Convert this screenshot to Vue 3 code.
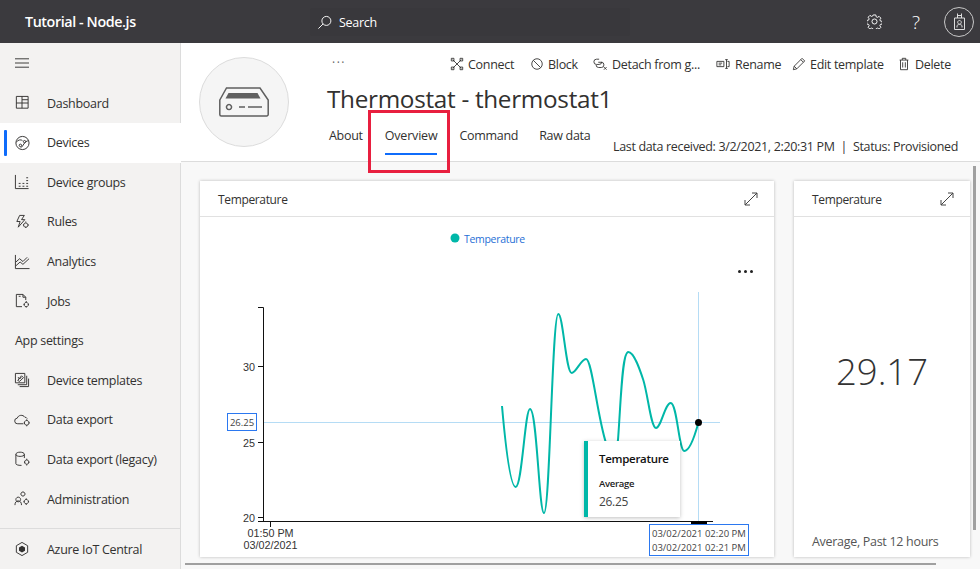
<script setup>
const groupA = [
  { label: 'Dashboard', icon: 'dash' },
  { label: 'Devices', icon: 'dev', active: true },
  { label: 'Device groups', icon: 'groups' },
  { label: 'Rules', icon: 'rules' },
  { label: 'Analytics', icon: 'analytics' },
  { label: 'Jobs', icon: 'jobs' },
]
const groupB = [
  { label: 'Device templates', icon: 'templates' },
  { label: 'Data export', icon: 'cloud' },
  { label: 'Data export (legacy)', icon: 'db' },
  { label: 'Administration', icon: 'admin' },
]
const paths = {
  dash: 'M2.500 1.500h12.500v12.500H2.500zM2.500 8.500h12.500M8.500 8.500v5.500M8.500 8.500V1.500M8.500 5h6.500',
  dev: 'M9 1.500a7 7 0 1 0 0 14a7 7 0 0 0 0-14zM2.500 7.500c2-2.500 5-3 6.500-1.500M15.500 6c-2 0-4 2-5 3.500s-2 3.500-3.500 4M5.500 11a1.300 1.300 0 1 0 2.600 0a1.300 1.300 0 1 0-2.600 0M10 7a1.200 1.200 0 1 0 2.400 0a1.200 1.200 0 1 0-2.400 0',
  groups: 'M1.500 1v14.500h14M5 13h2M9 13h2M13 13h2M9 10h2M13 10h2M13 7h2M13 4h2M5 10h2',
  rules: 'M6 1.500h5l-3 4.500h3.500l-7 8 2-6H3zM12.500 9.500a2.300 2.300 0 1 0 .01 0M12.500 8v1M12.500 13.500v1.200M9.500 11.700h1M14.800 11.700h1',
  analytics: 'M1.500 1v14.500h15M2 12.500l4.500-4 3 2.500 6.500-6M2 8.500l4-3.500 3.500 3L14 3.500',
  jobs: 'M2.500 1.500h7l3 3v3M2.500 1.500v13h6M5 3.500h2M9.500 1.500v3h3M13 10a2.300 2.300 0 1 0 .01 0M13 8.500v1.200M13 14.200v1.200M10.300 12.200h1.200M14.600 12.200h1.200',
  templates: 'M1.500 1.500h10v10h-10zM13.500 4v9.500H4M15.500 7v8.500H6M4 9l4-5 2 2-4 4zM4.500 5.500a1.500 1.500 0 1 0 3 0',
  cloud: 'M10 12.500H4a3 3 0 0 1 -.5-6c1-3.500 6-4 8-1 1 0 2 .5 2.500 1.500M13.500 9a2.500 2.500 0 1 0 .01 0M13.500 7.800v1.200M13.500 14v1.200M10.500 11.500h1.200M15.300 11.500h1.200',
  db: 'M2 3.500c0-3 9-3 9 0s-9 3-9 0zM2 3.500v10c0 1 2 1.800 6 1.800M11 3.500v4M13.500 9.500a2.300 2.300 0 1 0 .01 0M13.500 8.200v1.200M13.500 14.200v1.200M10.800 12h1.200M15.100 12h1.200',
  admin: 'M9.500 1a2.200 2.200 0 1 0 .01 0M4.500 6.500a2.500 2.500 0 1 0 .01 0M1 15c0-3 1.500-4.500 3.500-4.500S8 12 8 15M13 9a2.300 2.300 0 1 0 .01 0M13 7.800V9M13 13.600v1.200M10.200 11.300h1.200M14.800 11.300H16',
}
</script>

<template>
  <div class="app">
    <header class="topbar">
      <div class="brand">Tutorial - Node.js</div>
      <div class="search">
        <svg class="search-icon" viewBox="0 0 16 16"><path d="M10 1.500a4.800 4.800 0 1 0 0 9.600a4.800 4.800 0 0 0 0-9.600zM6.500 9.500L1.500 14.500" /></svg>
        <span>Search</span>
      </div>
      <div class="top-actions">
        <svg class="gear" viewBox="0 0 16 16"><path d="M6.600 1h2.800l.4 2 1.300.6 1.800-1.100 1.900 1.900-1.100 1.800.6 1.300 2 .4v2.800l-2 .4-.6 1.300 1.100 1.800-1.900 1.900-1.800-1.100-1.300.6-.4 2H6.600l-.4-2-1.300-.6-1.800 1.100-1.900-1.900 1.100-1.800-.6-1.300-2-.4V6.900l2-.4.6-1.300-1.100-1.800 1.900-1.900 1.800 1.100 1.300-.6zM8 5.300a2.700 2.700 0 1 0 0 5.400a2.700 2.700 0 0 0 0-5.400z" /></svg>
        <span class="help">?</span>
        <div class="avatar">
          <svg viewBox="0 0 11 17"><path d="M.5 5h10v11.500H.5zM3.500 5V.5M7.500 5V.5M3.500 2.500h4M3 14.500V13c0-2 5-2 5 0v1.500M5.500 7.500a1.800 1.800 0 1 0 .01 0" /></svg>
        </div>
      </div>
    </header>

    <div class="body">
      <nav class="sidebar">
        <div class="burger"><svg viewBox="0 0 15 10"><path d="M0 .5h15M0 5h15M0 9.500h15" /></svg></div>
        <div v-for="item in groupA" :key="item.label" class="nav-item" :class="{ active: item.active }">
          <svg viewBox="0 0 17 17"><path :d="paths[item.icon]" /></svg>
          <span>{{ item.label }}</span>
        </div>
        <div class="nav-head">App settings</div>
        <div v-for="item in groupB" :key="item.label" class="nav-item">
          <svg viewBox="0 0 17 17"><path :d="paths[item.icon]" /></svg>
          <span>{{ item.label }}</span>
        </div>
        <div class="nav-foot">
          <svg viewBox="0 0 17 17"><path d="M8.500 1.500l6 3.500v7l-6 3.500-6-3.500V5z" /><path class="solid" d="M8.500 5l3.200 1.800v3.600L8.500 12.200 5.300 10.400V6.800z" /></svg>
          <span>Azure IoT Central</span>
        </div>
      </nav>

      <main class="main">
        <section class="page-head">
          <div class="device-circle">
            <svg viewBox="0 0 50 30">
              <path d="M.8 13L7.500 1h33.500L49.200 13v14.500a1.500 1.500 0 0 1-1.500 1.500H2.300a1.500 1.500 0 0 1-1.500-1.500z" />
              <path class="solid" d="M6.500 11.500l3-5.500h29l3 5.500z" />
              <path d="M10 17.500a2.500 2.500 0 1 0 .01 0M20 20h6M29 20h14" />
            </svg>
          </div>
          <div class="head-col">
            <div class="toolbar">
              <span class="more">···</span>
              <div class="tool t-connect">
                <svg viewBox="0 0 16 16"><path d="M3 3l10 10M13 3L3 13M1.500 1.500h3v3h-3zM11.500 1.500h3v3h-3zM1.500 11.500h3v3h-3zM11.500 11.500h3v3h-3z" /></svg>Connect
              </div>
              <div class="tool t-block">
                <svg viewBox="0 0 16 16"><path d="M8 2a6 6 0 1 0 0 12a6 6 0 0 0 0-12zM3.800 3.800l8.400 8.400" /></svg>Block
              </div>
              <div class="tool t-detach">
                <svg viewBox="0 0 16 16"><path d="M7 2.500H4a3 3 0 0 0 0 6h3a3 3 0 0 0 3-3M6 6h3.500a3 3 0 0 1 0 6H6.500a3 3 0 0 1-3-3M12.500 11.500l3 3M15.500 11.500l-3 3" /></svg>Detach from g...
              </div>
              <div class="tool t-rename">
                <svg viewBox="0 0 16 16"><path d="M1 5h8v6H1zM3 7h4M3 9h3M12 3v10M10.500 3h3M10.500 13h3M13 5h2v6h-2" /></svg>Rename
              </div>
              <div class="tool t-edit">
                <svg viewBox="0 0 16 16"><path d="M1.500 14.500l1-4L11.500 1.500l3 3L5.500 13.500zM2.500 10.500l3 3M10 3l3 3" /></svg>Edit template
              </div>
              <div class="tool t-delete">
                <svg viewBox="0 0 16 16"><path d="M3 3.500h10M4 3.500v11h8v-11M6 3.500V1.500h4v2M6.500 6v6M9.500 6v6" /></svg>Delete
              </div>
            </div>
            <h1 class="title">Thermostat - thermostat1</h1>
            <div class="tab-row">
              <div class="tabs">
                <span class="tab">About</span>
                <span class="tab current">Overview</span>
                <span class="tab">Command</span>
                <span class="tab raw">Raw data</span>
              </div>
              <div class="status">Last data received: 3/2/2021, 2:20:31 PM&nbsp; | &nbsp;Status: Provisioned</div>
            </div>
          </div>
          <div class="callout"></div>
        </section>

        <section class="cards">
          <article class="card wide">
            <div class="card-head">
              <span>Temperature</span>
              <svg class="expand" viewBox="0 0 14 14"><path d="M1 13L13 1M8 1h5v5M1 8v5h5" /></svg>
            </div>
            <div class="chart">
              <svg class="plot" viewBox="200 217 574 340">
                <circle cx="455" cy="238" r="4.500" fill="#00b7a8" />
                <text x="464" y="243" class="legend">Temperature</text>
                <g fill="#222"><circle cx="739.500" cy="271.500" r="1.500" /><circle cx="745.500" cy="271.500" r="1.500" /><circle cx="751.500" cy="271.500" r="1.500" /></g>

                <path class="cross" d="M263 422.500H720M698.500 292V524" />
                <path class="axis" d="M258 307.500H263.500V521.500M258 366.500H263.500M258 442.500H263.500M258 517.500H263.500M258 521.500H713M270.500 521.500V527" />
                <rect x="691" y="521" width="16" height="3" fill="#000" />
                <path class="curve" d="M502 406C505 440 510 487 515.700 487C522 487 525 409 530 409C537 409 539 513 544 513C550 513 552 314 558.300 314C563 314 566 373 571.700 373C576 373 581 359 586 359C592 359 597 415 606 443C609 455 611 462 612 462C615 462 617 445 618 440C621 400 622 352 628.300 352C634 352 640 370 643.300 380C648 395 651 428 656 428C661 428 665 403 670.700 403C677 403 679 451 684.300 451C690 451 695 435 698.300 423" />
                <circle cx="698.500" cy="422.500" r="3.500" fill="#000" />

                <g class="ticks">
                  <text x="255" y="370.500" text-anchor="end">30</text>
                  <text x="255" y="446.500" text-anchor="end">25</text>
                  <text x="255" y="521.500" text-anchor="end">20</text>
                  <text x="270.500" y="536.500" text-anchor="middle">01:50 PM</text>
                  <text x="270.500" y="548.500" text-anchor="middle">03/02/2021</text>
                </g>
                <rect class="flag" x="227.500" y="413.500" width="29" height="17" />
                <text x="242" y="426" text-anchor="middle" class="flag-text">26.25</text>
                <rect class="flag" x="649.500" y="524.500" width="99" height="31" />
                <text x="652" y="537" class="flag-text">03/02/2021 02:20 PM</text>
                <text x="652" y="551" class="flag-text">03/02/2021 02:21 PM</text>
              </svg>
              <div class="tip">
                <div class="tip-title">Temperature</div>
                <div class="tip-label">Average</div>
                <div class="tip-value">26.25</div>
              </div>
            </div>
          </article>
          <article class="card narrow">
            <div class="card-head">
              <span>Temperature</span>
              <svg class="expand" viewBox="0 0 14 14"><path d="M1 13L13 1M8 1h5v5M1 8v5h5" /></svg>
            </div>
            <div class="kpi">
              <div class="kpi-value">29.17</div>
              <div class="kpi-note">Average, Past 12 hours</div>
            </div>
          </article>
        </section>
        <div class="scroll-v"></div>
        <div class="scroll-h"></div>
      </main>
    </div>
  </div>
</template>

<style>
html, body { margin: 0; overflow: hidden; }
</style>

<style scoped>
.app {
  width: 980px; height: 569px; display: flex; flex-direction: column; overflow: hidden;
  font-family: "Open Sans", "Liberation Sans", sans-serif; font-size: 12.500px; color: #323130;
  letter-spacing: -0.300px;
}
svg path { fill: none; stroke: currentColor; stroke-width: 1; }
svg path.solid { fill: currentColor; stroke: none; }

.topbar { height: 43px; flex: none; background: #3b3a3e; color: #fff; display: flex; align-items: center; }
.brand { width: 310px; padding-left: 25px; box-sizing: border-box; font-weight: 600; font-size: 14.300px; letter-spacing: -0.400px; }
.search { width: 320px; height: 28px; display: flex; align-items: center; padding: 1px 0 0 7px; gap: 7px; background: #39383c; border-radius: 2px; box-sizing: border-box; }
.search-icon { width: 15px; height: 15px; }
.top-actions { margin-left: auto; display: flex; align-items: center; padding-right: 6px; }
.gear { width: 15px; height: 15px; }
.help { font-size: 19px; margin-left: 30px; width: 10px; font-weight: 300; }
.avatar { width: 28px; height: 28px; margin-left: 22px; border: 1px solid #c8c8c8; border-radius: 50%; display: flex; align-items: center; justify-content: center; }
.avatar svg { width: 11px; height: 17px; color: #ddd; }

.body { flex: 1; min-height: 0; display: flex; }
.sidebar { width: 181px; flex: none; box-sizing: border-box; background: #f3f2f1; border-right: 1px solid #dcdcdc; display: flex; flex-direction: column; position: relative; }
.burger { height: 40.350px; flex: none; display: flex; align-items: center; padding-left: 15px; }
.burger svg { width: 14px; height: 10px; }
.nav-item { height: 39.600px; flex: none; display: flex; align-items: center; padding-left: 14px; gap: 17px; position: relative; }
.nav-item svg, .nav-foot svg { width: 16px; height: 16px; flex: none; }
.nav-item.active { background: #fff; margin-right: -1px; }
.nav-item.active::before { content: ""; position: absolute; left: 4px; top: 7px; bottom: 7px; width: 3px; background: #0f6cfb; border-radius: 1px; }
.nav-head { height: 39.600px; flex: none; display: flex; align-items: center; padding-left: 15px; }
.nav-foot { margin-top: auto; height: 41px; flex: none; box-sizing: border-box; border-top: 1px solid #dcdcdc; display: flex; align-items: center; padding-left: 14px; gap: 17px; }

.main { flex: 1; min-width: 0; position: relative; background: #f8f8f8; display: flex; flex-direction: column; }
.page-head { height: 119px; flex: none; box-sizing: border-box; background: #fff; border-bottom: 1px solid #dcdcdc; display: flex; position: relative; }
.device-circle { width: 90px; height: 90px; margin: 14px 0 0 18px; flex: none; box-sizing: border-box; border: 1px solid #dcdcdc; border-radius: 50%; background: #f5f5f5; display: flex; align-items: center; justify-content: center; color: #5f5f5f; }
.device-circle svg { width: 50px; height: 30px; }
.device-circle svg path { stroke-width: 1.500; }
.head-col { flex: 1; min-width: 0; padding-left: 38px; display: flex; flex-direction: column; }
.toolbar { height: 42px; display: flex; align-items: center; }
.more { margin-left: 5px; width: 118px; color: #666; font-size: 12px; line-height: 1; margin-top: -3px; letter-spacing: 1.500px; }
.tool { display: flex; align-items: center; gap: 4px; white-space: nowrap; }
.tool svg { width: 14px; height: 14px; flex: none; }
.t-connect { width: 80px; }
.t-block { width: 62px; }
.t-detach { width: 124px; }
.t-detach svg { width: 16px; }
.t-rename { width: 76px; gap: 5px; }
.t-edit { width: 105px; }
.title { margin: 0; font-weight: 400; font-size: 24.300px; line-height: 28px; letter-spacing: -0.300px; }
.tab-row { flex: 1; display: flex; position: relative; }
.tabs { display: flex; gap: 22px; padding: 14px 0 0 2px; }
.tab { height: 25px; position: relative; }
.tab.current { letter-spacing: -0.180px; }
.tab.raw { margin-left: -1px; }
.tab.current::after { content: ""; position: absolute; left: 0; right: 0; bottom: -3px; height: 2px; background: #0f6cfb; }
.status { margin-left: auto; margin-right: 22px; padding-top: 25px; letter-spacing: -0.330px; }
.callout { position: absolute; left: 187px; top: 67px; width: 76px; height: 57px; border: 3px solid #e81f3f; pointer-events: none; }

.cards { flex: 1; min-height: 0; display: flex; gap: 20px; padding: 19px 10px 12px 19px; }
.card { background: #fff; box-shadow: 0 0 3px rgba(0,0,0,.25); display: flex; flex-direction: column; }
.wide { width: 574px; flex: none; }
.narrow { flex: 1; min-width: 0; }
.card-head { height: 36px; flex: none; box-sizing: border-box; border-bottom: 1px solid #e1e1e1; display: flex; align-items: center; justify-content: space-between; padding: 1px 16px 0 18px; font-size: 12px; letter-spacing: -0.350px; }
.expand { width: 14px; height: 14px; color: #444; }
.chart { flex: 1; position: relative; }
.plot { display: block; width: 574px; height: 340px; }
.plot text { font-family: "Open Sans", sans-serif; }
.plot .legend { font-size: 10.500px; fill: #1f6fd6; }
.plot .cross { stroke: #b5dcf5; }
.plot .axis { stroke: #111; stroke-width: 1; }
.plot .curve { stroke: #00b7a8; stroke-width: 2; }
.plot .ticks text { font-family: "Liberation Sans", sans-serif; font-size: 10.800px; fill: #333; letter-spacing: 0; }
.plot .flag { fill: #fff; stroke: #2b78f0; stroke-width: 1; }
.plot .flag-text { font-family: "Open Sans", sans-serif; font-size: 9.500px; fill: #444; letter-spacing: 0; }
.tip { position: absolute; left: 384px; top: 224px; width: 96px; height: 76px; box-sizing: border-box; background: #fff; border-left: 4px solid #00b7a8; box-shadow: 0 1px 4px rgba(0,0,0,.25); padding: 10px 0 0 11px; }
.tip-title { font-weight: 600; font-size: 11.500px; color: #111; line-height: 16px; }
.tip-label { font-weight: 600; font-size: 9.500px; color: #222; margin-top: 10px; line-height: 14px; }
.tip-value { font-size: 12px; color: #444; line-height: 18px; margin-top: 2px; }
.kpi { flex: 1; display: flex; flex-direction: column; position: relative; padding-left: 18px; }
.kpi-value { flex: 1; display: flex; align-items: center; justify-content: center; margin-left: -18px; font-size: 36.500px; font-weight: 300; letter-spacing: 0; padding-bottom: 8px; color: #333; }
.kpi-note { height: 24px; color: #555; }

.scroll-v { position: absolute; right: 4px; top: 123px; width: 3px; height: 364px; background: #a0a0a0; }
.scroll-h { position: absolute; left: 4px; bottom: 4px; width: 751px; height: 2px; background: #a0a0a0; }
</style>
